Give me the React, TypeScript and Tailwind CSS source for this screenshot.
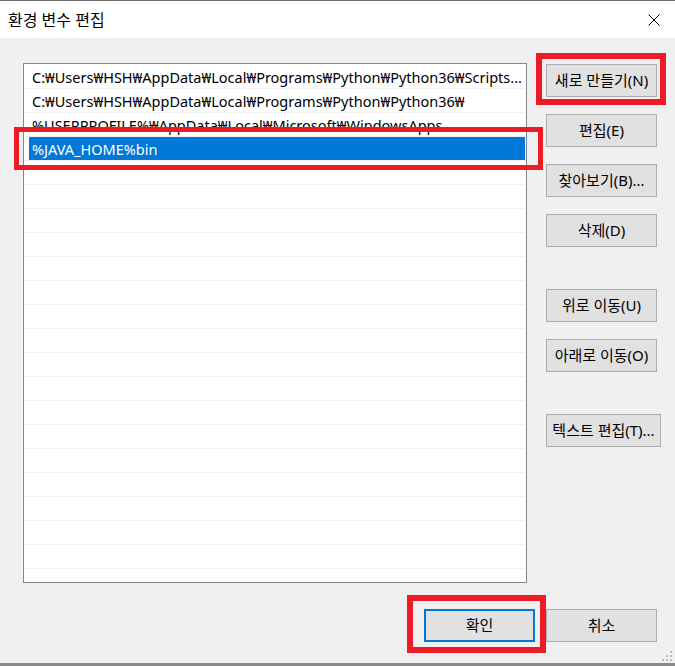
import React from 'react';

const rows = [
	"C:₩Users₩HSH₩AppData₩Local₩Programs₩Python₩Python36₩Scripts...",
	"C:₩Users₩HSH₩AppData₩Local₩Programs₩Python₩Python36₩",
	"%USERPROFILE%₩AppData₩Local₩Microsoft₩WindowsApps",
];

const font = {fontFamily: '"Noto Sans", "Noto Sans CJK KR", sans-serif'};

function Btn({label, className = "", primary = false}: {label: string; className?: string; primary?: boolean}) {
	return (
		<div
			className={`h-[33px] flex items-center justify-center bg-[#e1e1e1] text-[15px] text-black whitespace-nowrap ${primary ? "border-2 border-[#0078d7]" : "border border-[#adadad]"} ${className}`}
		>
			{label}
		</div>
	);
}

export default function App() {
	const empty = Array.from({length: 19});
	return (
		<div
			style={font}
			className="relative w-[675px] h-[666px] bg-[#f0f0f0] border-t border-b-[3px] border-t-[#6b6b6b] border-b-[#8a8a8a] flex flex-col overflow-hidden"
		>
			{/* title bar */}
			<div className="h-[37px] bg-white flex items-center justify-between pl-[8px] pr-[15px] shrink-0">
				<span className="text-[16px] text-black">환경 변수 편집</span>
				<svg width="12" height="12" viewBox="0 0 12 12" className="mt-[1px]">
					<path d="M0.5 0.5 L11.5 11.5 M11.5 0.5 L0.5 11.5" stroke="#000" strokeWidth="1"/>
				</svg>
			</div>

			<div className="flex pl-[23px] pt-[25px]">
				{/* path list */}
				<div className="w-[504px] h-[520px] border border-[#828790] bg-white pt-[1px] px-[1px] overflow-hidden shrink-0">
					{rows.map((r) => (
						<div key={r} className="h-[24px] border-b border-[#f0f0f0] pl-[7px] pt-[2px] text-[14.5px] leading-[20px] text-black whitespace-nowrap overflow-hidden">
							{r}
						</div>
					))}
					<div className="h-[24px] border-b border-[#f0f0f0] pl-[4px]">
						<div className="h-[23px] bg-[#0078d7] text-white text-[14.5px] leading-[20px] pt-[2px] pl-[3px]">
							%JAVA_HOME%bin
						</div>
					</div>
					{empty.map((_, i) => (
						<div key={i} className="h-[24px] border-b border-[#f0f0f0]"/>
					))}
				</div>

				{/* side buttons */}
				<div className="ml-[19px] mt-[1px] flex flex-col">
					<Btn label="새로 만들기(N)" className="w-[111px]"/>
					<Btn label="편집(E)" className="w-[111px] mt-[17px]"/>
					<Btn label="찾아보기(B)..." className="w-[111px] mt-[17px]"/>
					<Btn label="삭제(D)" className="w-[111px] mt-[17px]"/>
					<Btn label="위로 이동(U)" className="w-[111px] mt-[42px]"/>
					<Btn label="아래로 이동(O)" className="w-[111px] mt-[17px]"/>
					<Btn label="텍스트 편집(T)..." className="w-[115px] mt-[42px]"/>
				</div>
			</div>

			<div className="flex justify-end gap-[11px] pr-[18px] mt-[26px]">
				<Btn label="확인" primary className="w-[111px]"/>
				<Btn label="취소" className="w-[111px]"/>
			</div>

			{/* resize grip */}
			<svg width="12" height="12" viewBox="0 0 12 12" className="absolute right-[2px] bottom-[1px]">
				{[[9, 1], [5, 5], [9, 5], [1, 9], [5, 9], [9, 9]].map(([x, y]) => (
					<rect key={`${x}-${y}`} x={x} y={y} width="2" height="2" fill="#bcbcbc"/>
				))}
			</svg>

			{/* red annotation boxes */}
			<div className="absolute left-[14px] top-[126px] w-[529px] h-[43px] border-[5px] border-[#ed1c24]"/>
			<div className="absolute left-[536px] top-[52px] w-[130px] h-[52px] border-[6px] border-[#ed1c24]"/>
			<div className="absolute left-[407px] top-[594px] w-[139px] h-[58px] border-[6px] border-[#ed1c24]"/>
		</div>
	);
}
